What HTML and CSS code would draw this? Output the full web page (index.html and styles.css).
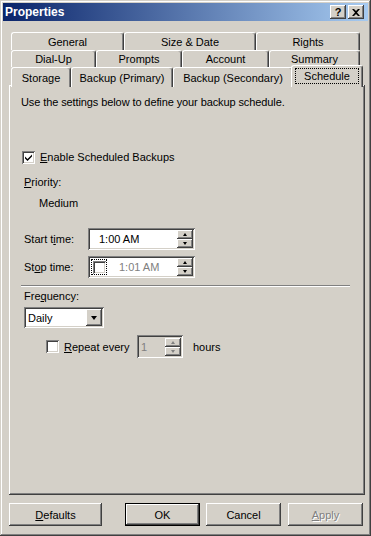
FILE: index.html
```html
<!DOCTYPE html>
<html lang="en">
<head>
    <meta charset="UTF-8">
    <title>Properties</title>
    <link rel="stylesheet" href="styles.css">
</head>
<body>
    <div class="window">
        <div class="titlebar">
            <span class="title">Properties</span>
            <div class="caption-buttons">
                <span class="cap-btn">?</span>
                <span class="cap-btn">
                    <svg width="8" height="7" viewBox="0 0 8 7"><path d="M0 0h2l2 2 2-2h2L5 3.5 8 7H6L4 5 2 7H0l3-3.5z" fill="#000"/></svg>
                </span>
            </div>
        </div>

        <div class="dialog">
            <div class="tabs">
                <div class="tab-row row1">
                    <div class="tab">General</div>
                    <div class="tab">Size &amp; Date</div>
                    <div class="tab">Rights</div>
                </div>
                <div class="tab-row row2">
                    <div class="tab">Dial-Up</div>
                    <div class="tab">Prompts</div>
                    <div class="tab">Account</div>
                    <div class="tab">Summary</div>
                </div>
                <div class="tab-row row3">
                    <div class="tab">Storage</div>
                    <div class="tab">Backup (Primary)</div>
                    <div class="tab">Backup (Secondary)</div>
                    <div class="tab selected"><span class="focus">Schedule</span></div>
                </div>
            </div>

            <div class="panel">
                <p class="intro">Use the settings below to define your backup schedule.</p>

                <div class="check-row enable">
                    <span class="checkbox">
                        <svg width="7" height="7" viewBox="0 0 7 7"><path d="M0 2.5l2.5 2.5L7 0.5V2.5L2.5 7 0 4.5z" fill="#000"/></svg>
                    </span>
                    <span><u>E</u>nable Scheduled Backups</span>
                </div>

                <div class="label priority"><u>P</u>riority:</div>
                <div class="value">Medium</div>

                <div class="time-row start">
                    <span class="time-label">Start t<u>i</u>me:</span>
                    <div class="field">
                        <span class="field-text">1:00 AM</span>
                        <div class="spin">
                            <span class="spin-btn"><i class="arrow-up"></i></span>
                            <span class="spin-btn"><i class="arrow-down"></i></span>
                        </div>
                    </div>
                </div>

                <div class="time-row stop">
                    <span class="time-label">St<u>o</u>p time:</span>
                    <div class="field">
                        <span class="inner-check"><span class="checkbox small"></span></span>
                        <span class="field-text disabled">1:01 AM</span>
                        <div class="spin">
                            <span class="spin-btn"><i class="arrow-up"></i></span>
                            <span class="spin-btn"><i class="arrow-down"></i></span>
                        </div>
                    </div>
                </div>

                <div class="separator"></div>

                <div class="label frequency">Fre<u>q</u>uency:</div>
                <div class="select">
                    <span class="select-text">Daily</span>
                    <span class="drop-btn"><i class="arrow-drop"></i></span>
                </div>

                <div class="repeat-row">
                    <span class="checkbox"></span>
                    <span class="repeat-label"><u>R</u>epeat every</span>
                    <div class="field small-field">
                        <span class="field-text disabled">1</span>
                        <div class="spin">
                            <span class="spin-btn"><i class="arrow-up grey"></i></span>
                            <span class="spin-btn"><i class="arrow-down grey"></i></span>
                        </div>
                    </div>
                    <span class="hours">hours</span>
                </div>
            </div>

            <div class="buttons">
                <span class="btn defaults"><u>D</u>efaults</span>
                <span class="btn default-btn">OK</span>
                <span class="btn cancel">Cancel</span>
                <span class="btn disabled-btn"><u>A</u>pply</span>
            </div>
        </div>
    </div>
</body>
</html>
```

FILE: styles.css
```css
body {
    margin: 0;
    font-family: "Liberation Sans", Arial, sans-serif;
    font-size: 11px;
    color: #000;
    background: #d4d0c8;
}
.window {
    width: 371px;
    height: 536px;
    box-sizing: border-box;
    padding: 3px;
    background: #d4d0c8;
    box-shadow: inset -1px -1px #404040, inset 1px 1px #d4d0c8,
                inset -2px -2px #808080, inset 2px 2px #fff;
}
.titlebar {
    height: 18px;
    display: flex;
    align-items: center;
    justify-content: space-between;
    padding: 0 2px 0 2px;
    background: linear-gradient(to right, #0a246a, #a6caf0);
}
.title {
    color: #fff;
    font-weight: bold;
    font-size: 12px;
}
.caption-buttons {
    display: flex;
    gap: 2px;
    margin-right: 2px;
}
.cap-btn {
    width: 16px;
    height: 14px;
    box-sizing: border-box;
    display: flex;
    align-items: center;
    justify-content: center;
    background: #d4d0c8;
    font-weight: bold;
    font-size: 11px;
    box-shadow: inset -1px -1px #404040, inset 1px 1px #fff,
                inset -2px -2px #808080;
}
.dialog {
    padding: 11px 3px 0 6px;
}
.tab-row {
    display: grid;
    height: 18px;
    margin: 0 2px;
    align-items: start;
}
.row1 { grid-template-columns: 113px 132px 104px; }
.row2 { grid-template-columns: 85px 86px 87px 91px; height: 17px; }
.row3 { grid-template-columns: 60px 102px 120px 68px; }
.tab {
    height: 100%;
    box-sizing: border-box;
    border-top: 1px solid #fff;
    border-left: 1px solid #fff;
    border-right: 1px solid #404040;
    border-radius: 3px 3px 0 0;
    box-shadow: inset -1px 0 #808080;
    display: flex;
    align-items: center;
    justify-content: center;
    background: #d4d0c8;
}
.tab.selected {
    position: relative;
    z-index: 1;
    height: 22px;
    margin: -2px -2px 0 -2px;
    padding-bottom: 2px;
}
.focus {
    outline: 1px dotted #000;
    padding: 1px 8px;
    margin-top: 1px;
}
.panel {
    height: 410px;
    box-sizing: border-box;
    padding: 11px 12px 0 12px;
    box-shadow: inset -1px -1px #404040, inset 1px 1px #fff,
                inset -2px -2px #808080;
}
.intro {
    margin: 0;
    line-height: 13px;
    letter-spacing: -0.1px;
}
.check-row {
    display: flex;
    align-items: center;
    gap: 5px;
    height: 13px;
    line-height: 13px;
}
.enable {
    margin: 42px 0 0 1px;
}
.checkbox {
    width: 13px;
    height: 13px;
    box-sizing: border-box;
    background: #fff;
    display: inline-flex;
    align-items: center;
    justify-content: center;
    box-shadow: inset 1px 1px #808080, inset -1px -1px #fff,
                inset 2px 2px #404040, inset -2px -2px #d4d0c8;
    flex: none;
}
.label {
    line-height: 13px;
    margin-left: 3px;
}
.priority {
    margin-top: 12px;
}
.value {
    line-height: 13px;
    margin: 8px 0 0 18px;
}
.time-row {
    display: flex;
    align-items: center;
    height: 22px;
    margin-left: 3px;
}
.start {
    margin-top: 18px;
}
.stop {
    margin-top: 6px;
}
.time-label {
    width: 64px;
}
.field {
    width: 107px;
    height: 22px;
    box-sizing: border-box;
    background: #fff;
    display: flex;
    align-items: center;
    padding: 2px;
    box-shadow: inset 1px 1px #808080, inset -1px -1px #fff,
                inset 2px 2px #404040, inset -2px -2px #d4d0c8;
}
.field-text {
    flex: 1;
    padding-left: 9px;
}
.field-text.disabled {
    color: #808080;
}
.inner-check {
    width: 16px;
    height: 16px;
    margin-left: 1px;
    box-sizing: border-box;
    outline: 1px dotted #000;
    outline-offset: -1px;
    display: flex;
    align-items: center;
    justify-content: center;
}
.inner-check + .field-text {
    padding-left: 12px;
}
.spin {
    display: flex;
    flex-direction: column;
    width: 16px;
    height: 18px;
}
.spin-btn {
    flex: 1;
    background: #d4d0c8;
    display: flex;
    align-items: center;
    justify-content: center;
    box-shadow: inset -1px -1px #404040, inset 1px 1px #fff,
                inset -2px -2px #808080;
}
.arrow-up, .arrow-down, .arrow-drop {
    width: 0;
    height: 0;
    border-left: 2.5px solid transparent;
    border-right: 2.5px solid transparent;
}
.arrow-up {
    border-bottom: 3px solid #000;
}
.arrow-down {
    border-top: 3px solid #000;
}
.arrow-up.grey {
    border-bottom-color: #808080;
}
.arrow-down.grey {
    border-top-color: #808080;
}
.separator {
    margin: 7px 3px 0 0;
    height: 1px;
    background: #808080;
    border-bottom: 1px solid #fff;
}
.frequency {
    margin-top: 3px;
}
.select {
    width: 80px;
    height: 21px;
    margin: 4px 0 0 3px;
    box-sizing: border-box;
    padding: 2px;
    display: flex;
    align-items: center;
    background: #fff;
    box-shadow: inset 1px 1px #808080, inset -1px -1px #fff,
                inset 2px 2px #404040, inset -2px -2px #d4d0c8;
}
.select-text {
    flex: 1;
    padding-left: 2px;
}
.drop-btn {
    width: 16px;
    height: 17px;
    display: flex;
    align-items: center;
    justify-content: center;
    background: #d4d0c8;
    box-shadow: inset -1px -1px #404040, inset 1px 1px #fff,
                inset -2px -2px #808080;
}
.arrow-drop {
    border-left-width: 3.5px;
    border-right-width: 3.5px;
    border-top: 4px solid #000;
}
.repeat-row {
    display: flex;
    align-items: center;
    height: 23px;
    margin: 7px 0 0 25px;
}
.repeat-label {
    margin-left: 5px;
    width: 73px;
}
.small-field {
    width: 46px;
    height: 23px;
    background: #d4d0c8;
}
.small-field .field-text {
    padding-left: 2px;
}
.hours {
    margin-left: 10px;
}
.buttons {
    display: flex;
    margin-top: 8px;
    height: 23px;
}
.btn {
    width: 75px;
    box-sizing: border-box;
    display: flex;
    align-items: center;
    justify-content: center;
    box-shadow: inset -1px -1px #404040, inset 1px 1px #fff,
                inset -2px -2px #808080;
}
.defaults {
    width: 93px;
}
.default-btn {
    margin-left: 23px;
    border: 1px solid #000;
    box-shadow: inset -1px -1px #404040, inset 1px 1px #fff,
                inset -2px -2px #808080;
}
.cancel {
    margin-left: 6px;
}
.disabled-btn {
    margin-left: 7px;
    color: #808080;
    text-shadow: 1px 1px #fff;
}
```
